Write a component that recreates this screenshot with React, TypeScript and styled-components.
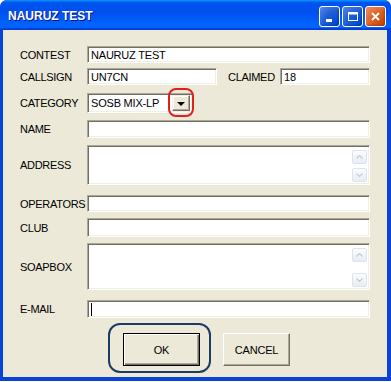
import React from 'react'
import styled, { createGlobalStyle } from 'styled-components'

const Global = createGlobalStyle`
  html, body {
    margin: 0;
    padding: 0;
    background: #ffffff;
  }
  * { box-sizing: border-box; }
`

const Window = styled.div`
  width: 391px;
  height: 381px;
  display: flex;
  flex-direction: column;
  background: #0842d9;
  border-radius: 7px 7px 0 0;
  padding: 0 4px 4px 3px;
  font-family: "Liberation Sans", Arial, sans-serif;
`

const TitleBar = styled.div`
  height: 30px;
  margin: 0 -4px 0 -3px;
  border-radius: 7px 7px 0 0;
  display: flex;
  align-items: center;
  padding: 2px 5px 0 8px;
  background: linear-gradient(
    #0997ff 0%,
    #0053ee 9%,
    #0050ee 40%,
    #0066ff 86%,
    #0060f8 92%,
    #003dd7 96%,
    #003dd7 100%
  );
`

const Title = styled.div`
  flex: 1;
  color: #fff;
  font-weight: bold;
  font-size: 12px;
  text-shadow: 1px 1px #0f1089;
`

const Controls = styled.div`
  display: flex;
  gap: 2px;
`

const CtlButton = styled.div<{ $close?: boolean }>`
  width: 21px;
  height: 21px;
  border: 1px solid #fff;
  border-radius: 3px;
  display: flex;
  align-items: center;
  justify-content: center;
  background: ${p =>
    p.$close
      ? 'radial-gradient(circle at 90% 90%, #cc4600 0%, #dc6527 55%, #f09070 100%)'
      : 'radial-gradient(circle at 90% 90%, #0046d8 0%, #1f5ed8 55%, #5a8ae6 100%)'};
  box-shadow: inset -1px -1px 2px rgba(0, 0, 0, 0.25);
`

const Body = styled.div`
  flex: 1;
  background: #ece9d8;
  padding: 16px 0 0 17px;
  position: relative;
`

const Row = styled.div<{ $mt?: number }>`
  display: grid;
  grid-template-columns: 67px 283px;
  align-items: center;
  margin-top: ${p => p.$mt ?? 0}px;
`

const Label = styled.div`
  font-size: 11px;
  letter-spacing: -0.3px;
  color: #000;
  white-space: nowrap;
`

const sunken = `
  background: #fff;
  border-top: 1px solid #aca899;
  border-left: 1px solid #aca899;
  border-right: 1px solid #fff;
  border-bottom: 1px solid #fff;
  box-shadow: inset 1px 1px #716f64, inset -1px -1px #f1efe2;
`

const Field = styled.div<{ $h?: number; $w?: number }>`
  ${sunken}
  height: ${p => p.$h ?? 18}px;
  width: ${p => (p.$w ? `${p.$w}px` : 'auto')};
  flex: ${p => (p.$w ? 'none' : '1')};
  font-size: 11px;
  letter-spacing: -0.2px;
  color: #000;
  padding: 0 3px;
  display: flex;
  align-items: center;
  position: relative;
`

const Caret = styled.span`
  width: 1px;
  height: 13px;
  background: #000;
`

const Inline = styled.div`
  display: flex;
  align-items: center;
`

const ClaimedLabel = styled(Label)`
  margin: 0 0 0 11px;
  width: 52px;
`

const Combo = styled.div`
  ${sunken}
  width: 106px;
  height: 20px;
  display: flex;
  align-items: center;
  padding: 2px;
  font-size: 11px;
  letter-spacing: -0.2px;
`

const ComboText = styled.div`
  flex: 1;
  padding-left: 1px;
`

const DropButton = styled.div`
  width: 18px;
  height: 16px;
  background: #ece9d8;
  border-top: 1px solid #f1efe2;
  border-left: 1px solid #f1efe2;
  border-right: 1px solid #716f64;
  border-bottom: 1px solid #716f64;
  box-shadow: inset -1px -1px #aca899, inset 1px 1px #fff;
  display: flex;
  align-items: center;
  justify-content: center;
  position: relative;

  &::before {
    content: '';
    border-left: 4px solid transparent;
    border-right: 4px solid transparent;
    border-top: 4px solid #000;
    margin-top: 1px;
  }

  &::after {
    content: '';
    position: absolute;
    left: -5px;
    right: -5px;
    top: -8px;
    bottom: -7px;
    border: 2px solid #e0201e;
    border-radius: 8px;
  }
`

const Scroll = styled.div`
  position: absolute;
  right: 2px;
  top: 4px;
  bottom: 2px;
  width: 15px;
  display: flex;
  flex-direction: column;
  justify-content: space-between;
`

const ScrollBtn = styled.div`
  height: 14px;
  border: 1px solid #dde3ee;
  border-radius: 2px;
  background: linear-gradient(#fbfcfe, #e8ecf4);
  display: flex;
  align-items: center;
  justify-content: center;
  color: #c4cbd6;
`

const ButtonRow = styled.div`
  display: flex;
  gap: 23px;
  margin: 15px 0 0 103px;
`

const PushButton = styled.div<{ $default?: boolean; $w: number }>`
  width: ${p => p.$w}px;
  height: 33px;
  background: #ece9d8;
  font-size: 11px;
  letter-spacing: -0.2px;
  color: #000;
  display: flex;
  align-items: center;
  justify-content: center;
  position: relative;
  border: 1px solid ${p => (p.$default ? '#000' : '#fff')};
  border-right-color: ${p => (p.$default ? '#000' : '#716f64')};
  border-bottom-color: ${p => (p.$default ? '#000' : '#716f64')};
  box-shadow: ${p =>
    p.$default
      ? 'inset 1px 1px #fff, inset -1px -1px #716f64, inset -2px -2px #aca899'
      : 'inset -1px -1px #aca899'};

  &::after {
    content: '';
    display: ${p => (p.$default ? 'block' : 'none')};
    position: absolute;
    left: -16px;
    right: -12px;
    top: -11px;
    bottom: -8px;
    border: 2px solid #1b3a66;
    border-radius: 12px;
  }
`

const Chevron = ({ up }: { up?: boolean }) => (
  <svg width="7" height="4" viewBox="0 0 7 4">
    <path d={up ? 'M0.5 3.5 L3.5 0.5 L6.5 3.5' : 'M0.5 0.5 L3.5 3.5 L6.5 0.5'} fill="none" stroke="currentColor" strokeWidth="1.2" />
  </svg>
)

const ScrollBar = () => (
  <Scroll>
    <ScrollBtn><Chevron up /></ScrollBtn>
    <ScrollBtn><Chevron /></ScrollBtn>
  </Scroll>
)

const App = () => {
  return (
    <>
      <Global />
      <Window>
        <TitleBar>
          <Title>NAURUZ TEST</Title>
          <Controls>
            <CtlButton>
              <svg width="13" height="13" viewBox="0 0 13 13">
                <rect x="3" y="9" width="6" height="3" fill="#fff" />
              </svg>
            </CtlButton>
            <CtlButton>
              <svg width="13" height="13" viewBox="0 0 13 13">
                <rect x="2.5" y="2.5" width="9" height="8" fill="none" stroke="#fff" strokeWidth="1" />
                <rect x="2" y="2" width="10" height="2.5" fill="#fff" />
              </svg>
            </CtlButton>
            <CtlButton $close>
              <svg width="13" height="13" viewBox="0 0 13 13">
                <path d="M3 3 L10 10 M10 3 L3 10" stroke="#fff" strokeWidth="2" />
              </svg>
            </CtlButton>
          </Controls>
        </TitleBar>
        <Body>
          <Row>
            <Label>CONTEST</Label>
            <Field $h={17}>NAURUZ TEST</Field>
          </Row>
          <Row $mt={5}>
            <Label>CALLSIGN</Label>
            <Inline>
              <Field $h={17} $w={130}>UN7CN</Field>
              <ClaimedLabel>CLAIMED</ClaimedLabel>
              <Field $h={17}>18</Field>
            </Inline>
          </Row>
          <Row $mt={8}>
            <Label>CATEGORY</Label>
            <Combo>
              <ComboText>SOSB MIX-LP</ComboText>
              <DropButton />
            </Combo>
          </Row>
          <Row $mt={7}>
            <Label>NAME</Label>
            <Field $h={18} />
          </Row>
          <Row $mt={7}>
            <Label>ADDRESS</Label>
            <Field $h={40}>
              <ScrollBar />
            </Field>
          </Row>
          <Row $mt={10}>
            <Label>OPERATORS</Label>
            <Field $h={17} />
          </Row>
          <Row $mt={6}>
            <Label>CLUB</Label>
            <Field $h={19} />
          </Row>
          <Row $mt={6}>
            <Label>SOAPBOX</Label>
            <Field $h={47}>
              <ScrollBar />
            </Field>
          </Row>
          <Row $mt={10}>
            <Label>E-MAIL</Label>
            <Field $h={18}>
              <Caret />
            </Field>
          </Row>
          <ButtonRow>
            <PushButton $default $w={77}>OK</PushButton>
            <PushButton $w={67}>CANCEL</PushButton>
          </ButtonRow>
        </Body>
      </Window>
    </>
  )
}

export default App
